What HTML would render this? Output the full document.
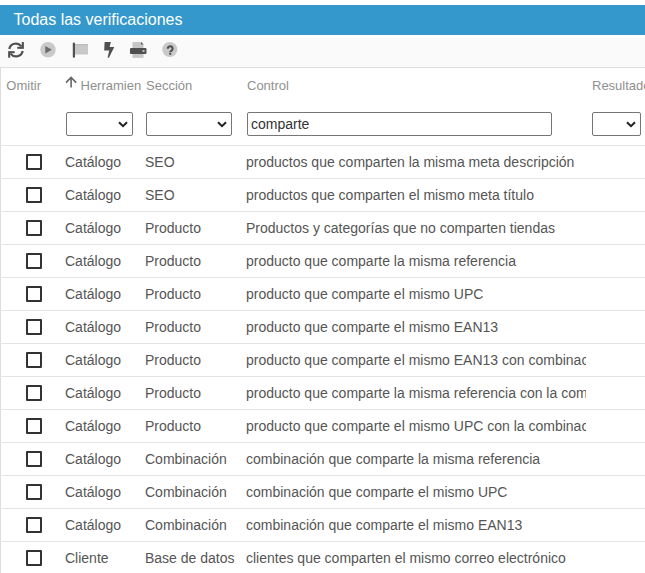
<!DOCTYPE html>
<html><head><meta charset="utf-8">
<style>
*{box-sizing:border-box;margin:0;padding:0}
html,body{width:645px;height:573px;overflow:hidden;background:#fff;font-family:"Liberation Sans",sans-serif;color:#333}
.title{position:absolute;left:0;top:5px;width:645px;height:30px;background:#3498cd;color:#fff;font-size:16px;line-height:30px;padding-left:13.5px}
.tb{position:absolute;left:0;top:38px;width:645px;height:30px;background:#fafafa;border-bottom:1px solid #ddd}
.tb svg{position:absolute}
.lb{position:absolute;left:0;top:68px;width:1px;height:506px;background:#ddd}
.h{position:absolute;top:78px;font-size:13px;color:#8f8f8f;line-height:15px;white-space:nowrap}
.sel{position:absolute;top:112px;height:24px;border:1px solid #767676;border-radius:2px;background:#fff}
.sel svg{position:absolute;right:4px;top:8px}
.inp{position:absolute;top:112px;left:247px;width:305px;height:24px;border:1px solid #767676;border-radius:2px;background:#fff;font-size:14px;line-height:23px;padding-left:3px;color:#333}
.row{position:absolute;left:0;width:645px;height:33px;border-top:1px solid #e4e4e4}
.row .c{position:absolute;top:8px;font-size:14px;line-height:16px;color:#555;white-space:nowrap;overflow:hidden}
.cb{position:absolute;left:26px;top:8px;width:16px;height:16px;border:2px solid #333;border-radius:1px}
</style></head><body>
<div class="title">Todas las verificaciones</div>
<div class="tb">
<svg width="645" height="29" viewBox="0 38 645 29" style="left:0;top:0">
 <g fill="none" stroke="#505050" stroke-width="2.2"><path d="M9.3 49 A6.7 6.7 0 0 1 21.2 46.2"/><path d="M22.7 51 A6.7 6.7 0 0 1 10.8 53.8"/></g>
 <g fill="#505050"><path d="M17.3 48.7 H23.8 V42 H21.8 V46.7 H17.3 Z"/><path d="M8.2 51.2 H14.7 V53.2 H10.2 V57.8 H8.2 Z"/><path d="M18 48.7 L23.8 42.9 V48.7 Z" opacity="0.55"/><path d="M14 51.2 L8.2 57 V51.2 Z" opacity="0.55"/></g>
 <circle cx="48" cy="49.7" r="7.7" fill="#c9c9c9"/>
 <path d="M45.3 46 L51.9 49.7 L45.3 53.4 Z" fill="#6a6a6a"/>
 <rect x="72.8" y="42.5" width="2.2" height="15.3" rx="1" fill="#505050"/>
 <rect x="75" y="44.2" width="13" height="10.3" fill="#c8c8c8"/><rect x="75" y="44.2" width="13" height="1" fill="#b8b8b8"/>
 <path d="M104.6 42.1 H110.9 L109.6 47.1 H114.3 L108.9 57.7 H107.6 L109.2 50.6 H104.2 Z" fill="#505050"/>
 <path d="M132.5 42 L141.5 42 L143.5 44 L143.5 48 L132.5 48 Z" fill="#c6c6c6"/>
 <path d="M141 42 L143.5 44.5 L141 44.5 Z" fill="#555"/>
 <rect x="130" y="48" width="16.5" height="6" rx="1" fill="#505050"/>
 <rect x="142.5" y="50.3" width="2" height="1.5" fill="#ddd"/>
 <rect x="132.5" y="54" width="11" height="3.8" fill="#c6c6c6"/>
 <circle cx="169.8" cy="49.5" r="7.6" fill="#c9c9c9"/>
 <path d="M167.8 48.8 A2.4 2.4 0 1 1 171.6 50.6 Q170.2 51.3 170.2 52.3" fill="none" stroke="#505050" stroke-width="2.1"/><circle cx="170.2" cy="53.8" r="1.15" fill="#505050"/>
</svg>
</div>
<div class="lb"></div>
<div class="h" style="left:6.3px">Omitir</div>
<svg style="position:absolute;left:0;top:0" width="100" height="100"><path d="M71.1 87.5 V78 M66 82.6 L71.1 77.5 L76.2 82.6" fill="none" stroke="#666" stroke-width="1.6"/></svg>
<div class="h" style="left:80.5px">Herramien</div>
<div class="h" style="left:146px">Sección</div>
<div class="h" style="left:247px">Control</div>
<div class="h" style="left:592px">Resultado</div>
<div class="sel" style="left:66px;width:67px"><svg width="10" height="7"><path d="M1 1.2 L5 5.2 L9 1.2" fill="none" stroke="#222" stroke-width="2"/></svg></div>
<div class="sel" style="left:146px;width:86px"><svg width="10" height="7"><path d="M1 1.2 L5 5.2 L9 1.2" fill="none" stroke="#222" stroke-width="2"/></svg></div>
<div class="inp">comparte</div>
<div class="sel" style="left:592px;width:49px"><svg width="10" height="7"><path d="M1 1.2 L5 5.2 L9 1.2" fill="none" stroke="#222" stroke-width="2"/></svg></div>

<div class="row" style="top:145px"><div class="cb"></div><div class="c" style="left:65px">Catálogo</div><div class="c" style="left:145px">SEO</div><div class="c" style="left:246px;width:340px">productos que comparten la misma meta descripción</div></div>
<div class="row" style="top:178px"><div class="cb"></div><div class="c" style="left:65px">Catálogo</div><div class="c" style="left:145px">SEO</div><div class="c" style="left:246px;width:340px">productos que comparten el mismo meta título</div></div>
<div class="row" style="top:211px"><div class="cb"></div><div class="c" style="left:65px">Catálogo</div><div class="c" style="left:145px">Producto</div><div class="c" style="left:246px;width:340px">Productos y categorías que no comparten tiendas</div></div>
<div class="row" style="top:244px"><div class="cb"></div><div class="c" style="left:65px">Catálogo</div><div class="c" style="left:145px">Producto</div><div class="c" style="left:246px;width:340px">producto que comparte la misma referencia</div></div>
<div class="row" style="top:277px"><div class="cb"></div><div class="c" style="left:65px">Catálogo</div><div class="c" style="left:145px">Producto</div><div class="c" style="left:246px;width:340px">producto que comparte el mismo UPC</div></div>
<div class="row" style="top:310px"><div class="cb"></div><div class="c" style="left:65px">Catálogo</div><div class="c" style="left:145px">Producto</div><div class="c" style="left:246px;width:340px">producto que comparte el mismo EAN13</div></div>
<div class="row" style="top:343px"><div class="cb"></div><div class="c" style="left:65px">Catálogo</div><div class="c" style="left:145px">Producto</div><div class="c" style="left:246px;width:340px">producto que comparte el mismo EAN13 con combinaciones</div></div>
<div class="row" style="top:376px"><div class="cb"></div><div class="c" style="left:65px">Catálogo</div><div class="c" style="left:145px">Producto</div><div class="c" style="left:246px;width:340px">producto que comparte la misma referencia con la combinación</div></div>
<div class="row" style="top:409px"><div class="cb"></div><div class="c" style="left:65px">Catálogo</div><div class="c" style="left:145px">Producto</div><div class="c" style="left:246px;width:340px">producto que comparte el mismo UPC con la combinación</div></div>
<div class="row" style="top:442px"><div class="cb"></div><div class="c" style="left:65px">Catálogo</div><div class="c" style="left:145px">Combinación</div><div class="c" style="left:246px;width:340px">combinación que comparte la misma referencia</div></div>
<div class="row" style="top:475px"><div class="cb"></div><div class="c" style="left:65px">Catálogo</div><div class="c" style="left:145px">Combinación</div><div class="c" style="left:246px;width:340px">combinación que comparte el mismo UPC</div></div>
<div class="row" style="top:508px"><div class="cb"></div><div class="c" style="left:65px">Catálogo</div><div class="c" style="left:145px">Combinación</div><div class="c" style="left:246px;width:340px">combinación que comparte el mismo EAN13</div></div>
<div class="row" style="top:541px"><div class="cb"></div><div class="c" style="left:65px">Cliente</div><div class="c" style="left:145px">Base de datos</div><div class="c" style="left:246px;width:340px">clientes que comparten el mismo correo electrónico</div></div>
</body></html>
